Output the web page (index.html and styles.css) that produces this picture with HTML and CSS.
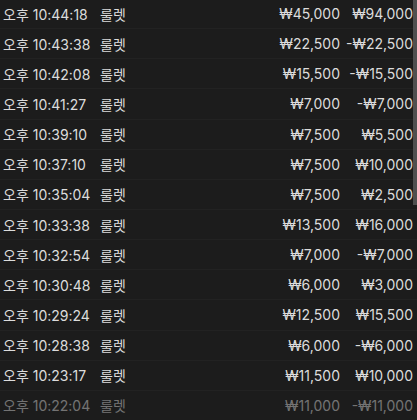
FILE: index.html
```html
<!DOCTYPE html>
<html lang="ko">
<head>
<meta charset="utf-8">
<link rel="stylesheet" href="styles.css">
</head>
<body>
<div class="list">
  <div class="row"><span class="time">오후 10:44:18</span><span class="game">룰렛</span><span class="bet">₩45,000</span><span class="res">₩94,000</span></div>
  <div class="row"><span class="time">오후 10:43:38</span><span class="game">룰렛</span><span class="bet">₩22,500</span><span class="res">-₩22,500</span></div>
  <div class="row"><span class="time">오후 10:42:08</span><span class="game">룰렛</span><span class="bet">₩15,500</span><span class="res">-₩15,500</span></div>
  <div class="row"><span class="time">오후 10:41:27</span><span class="game">룰렛</span><span class="bet">₩7,000</span><span class="res">-₩7,000</span></div>
  <div class="row"><span class="time">오후 10:39:10</span><span class="game">룰렛</span><span class="bet">₩7,500</span><span class="res">₩5,500</span></div>
  <div class="row"><span class="time">오후 10:37:10</span><span class="game">룰렛</span><span class="bet">₩7,500</span><span class="res">₩10,000</span></div>
  <div class="row"><span class="time">오후 10:35:04</span><span class="game">룰렛</span><span class="bet">₩7,500</span><span class="res">₩2,500</span></div>
  <div class="row"><span class="time">오후 10:33:38</span><span class="game">룰렛</span><span class="bet">₩13,500</span><span class="res">₩16,000</span></div>
  <div class="row"><span class="time">오후 10:32:54</span><span class="game">룰렛</span><span class="bet">₩7,000</span><span class="res">-₩7,000</span></div>
  <div class="row"><span class="time">오후 10:30:48</span><span class="game">룰렛</span><span class="bet">₩6,000</span><span class="res">₩3,000</span></div>
  <div class="row"><span class="time">오후 10:29:24</span><span class="game">룰렛</span><span class="bet">₩12,500</span><span class="res">₩15,500</span></div>
  <div class="row"><span class="time">오후 10:28:38</span><span class="game">룰렛</span><span class="bet">₩6,000</span><span class="res">-₩6,000</span></div>
  <div class="row"><span class="time">오후 10:23:17</span><span class="game">룰렛</span><span class="bet">₩11,500</span><span class="res">₩10,000</span></div>
  <div class="row faded"><span class="time">오후 10:22:04</span><span class="game">룰렛</span><span class="bet">₩11,000</span><span class="res">-₩11,000</span></div>
</div>
<div class="scrollbar"></div>
</body>
</html>
```
FILE: styles.css
```css
html, body {
  margin: 0;
  padding: 0;
  background: #1c1c1c;
  height: 420px;
  overflow: hidden;
}
body {
  font-family: Inter, "Noto Sans CJK KR", sans-serif;
  font-size: 14px;
  color: #dcdcdc;
  position: relative;
}
.list {
  display: flex;
  flex-direction: column;
  margin-top: -1px;
}
.row {
  display: grid;
  grid-template-columns: 97px 1fr 90px 73px;
  align-items: center;
  height: 30.15px;
  padding: 0 4px 0 3px;
  box-sizing: border-box;
  border-bottom: 1px solid #222;
  white-space: nowrap;
}
.bet, .res {
  text-align: right;
}
.faded {
  opacity: 0.45;
}
.scrollbar {
  position: absolute;
  top: 0;
  right: 0;
  width: 4px;
  height: 205px;
  background: #4f4f4f;
}
```
